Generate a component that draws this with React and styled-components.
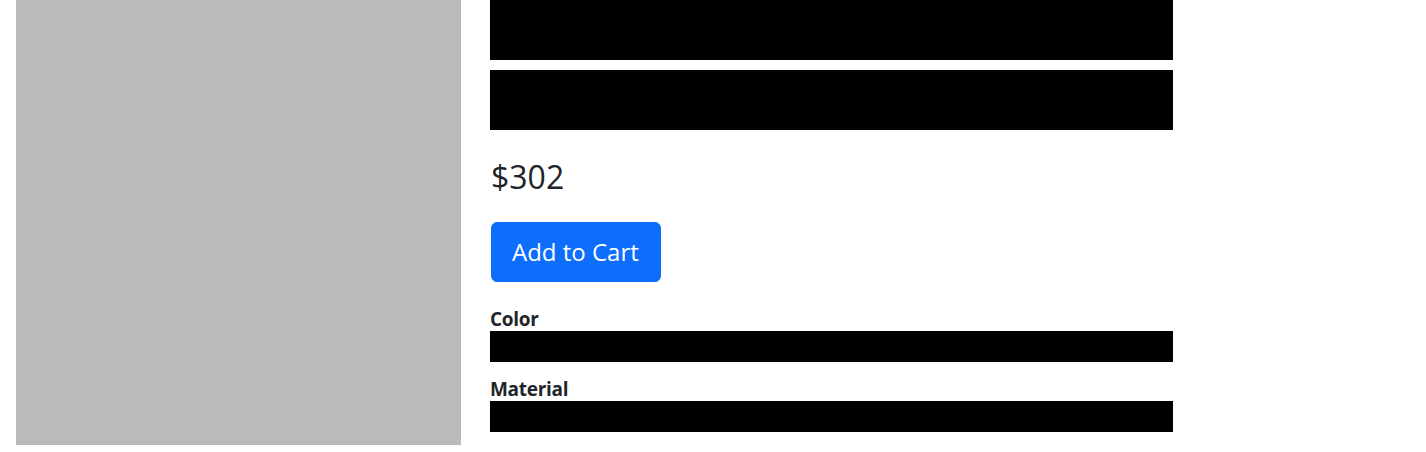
import React from 'react';
import styled, { createGlobalStyle } from 'styled-components';

const GlobalStyle = createGlobalStyle`
  body {
    margin: 0;
    background: #fff;
    font-family: "Open Sans", "Noto Sans", sans-serif;
    color: #212529;
  }
`;

const Page = styled.div`
  display: flex;
  align-items: flex-start;
  gap: 29px;
  padding: 0 16px;
`;

const ImageBox = styled.div`
  width: 445px;
  height: 445px;
  background: #bababa;
  flex-shrink: 0;
`;

const Details = styled.div`
  width: 683px;
  display: flex;
  flex-direction: column;
`;

const Redacted = styled.div`
  background: #000;
  height: ${({ h }) => h}px;
  margin-top: ${({ mt }) => mt || 0}px;
`;

const Price = styled.div`
  font-size: 32px;
  line-height: 38px;
  margin-top: 28px;
  margin-left: 1px;
`;

const CartButton = styled.button`
  align-self: flex-start;
  margin-top: 26px;
  margin-left: 1px;
  height: 60px;
  padding: 0 21px 0 20px;
  border: 1px solid #0d6efd;
  border-radius: 6px;
  background: #0d6efd;
  color: #fff;
  font-family: inherit;
  font-size: 24px;
  line-height: 36px;
  cursor: pointer;
`;

const Label = styled.div`
  font-size: 19px;
  line-height: 23px;
  font-weight: 700;
  margin-top: ${({ mt }) => mt}px;
  letter-spacing: -0.3px;
`;

export default function App() {
  return (
    <>
      <GlobalStyle />
      <Page>
        <ImageBox />
        <Details>
          <Redacted h={60} />
          <Redacted h={60} mt={10} />
          <Price>$302</Price>
          <CartButton>Add to Cart</CartButton>
          <Label mt={26}>Color</Label>
          <Redacted h={31} />
          <Label mt={16}>Material</Label>
          <Redacted h={31} />
        </Details>
      </Page>
    </>
  );
}
